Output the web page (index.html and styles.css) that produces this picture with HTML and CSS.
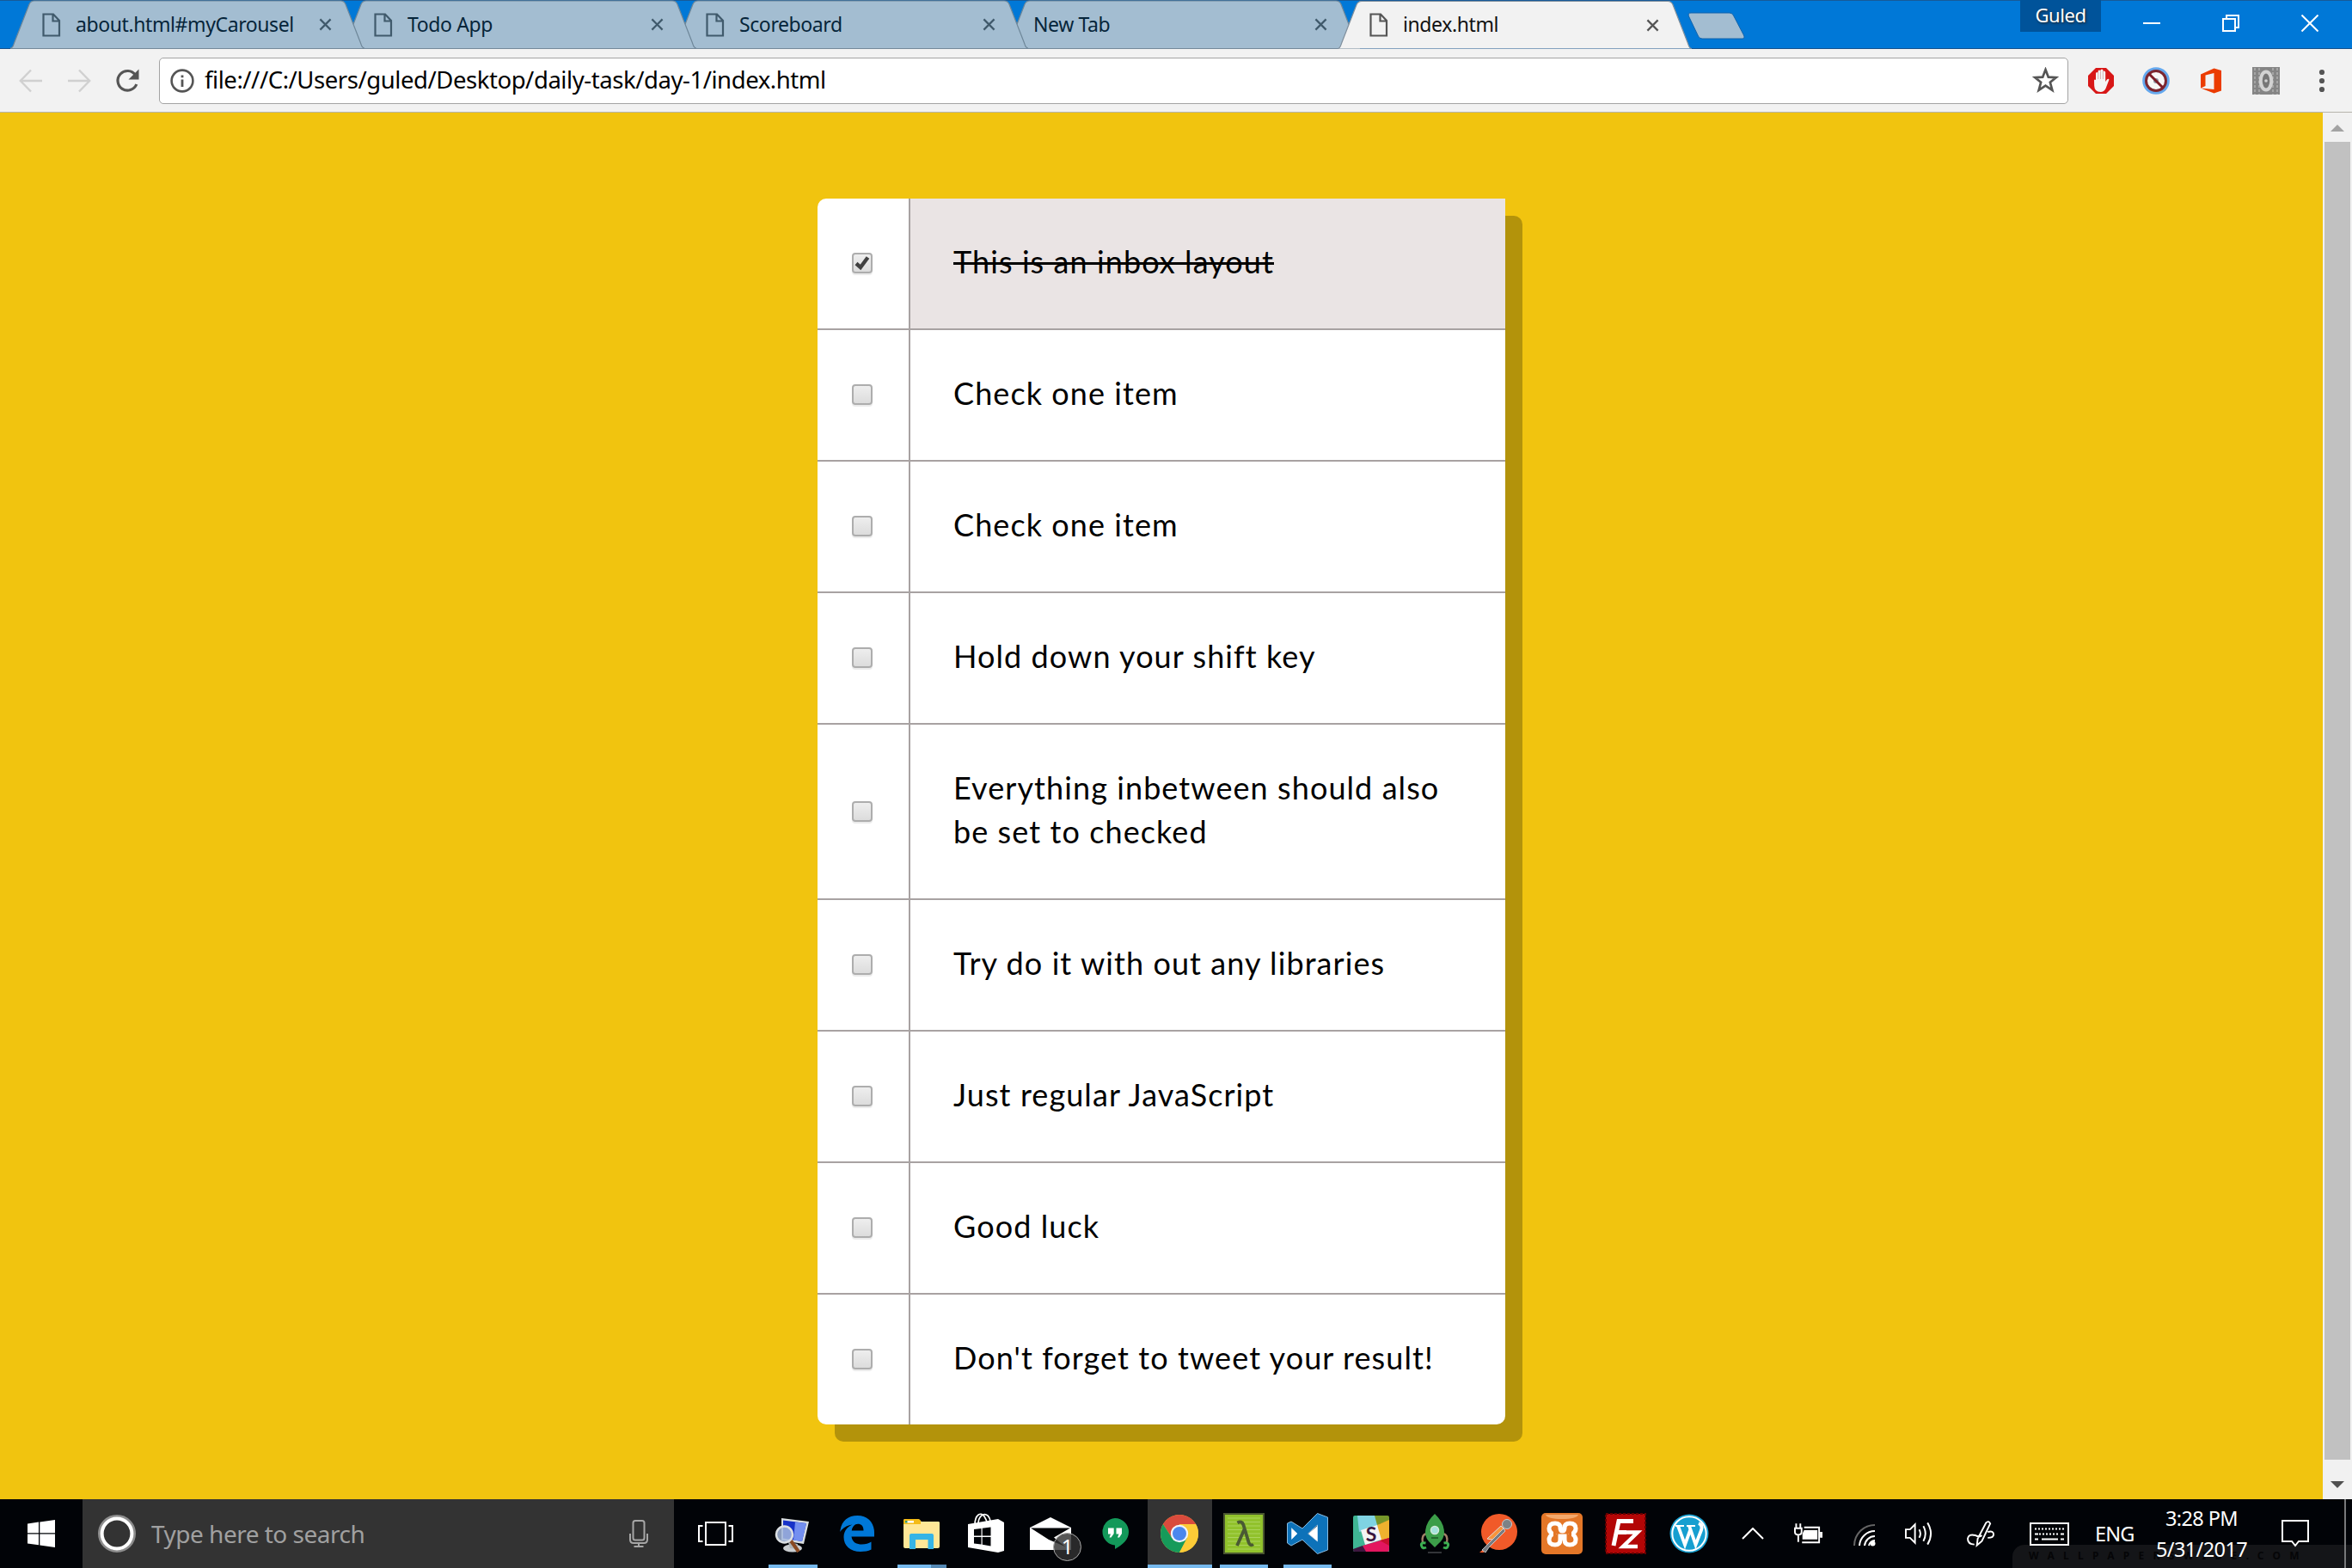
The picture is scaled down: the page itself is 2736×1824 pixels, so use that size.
FILE: index.html
```html
<!DOCTYPE html>
<html lang="en">
<head>
<meta charset="utf-8">
<title>index.html</title>
<link rel="stylesheet" href="styles.css">
</head>
<body>
<svg class="defs" aria-hidden="true">
  <symbol id="file" viewBox="0 0 22 28"><path d="M1.5 1.5H13L20 9V26.500H1.500zM12.500 1.500V9.500H20" fill="none" stroke="currentColor" stroke-width="2.2"/></symbol>
  <symbol id="x" viewBox="0 0 16 16"><path d="M1.500 1.500 14.500 14.500M14.500 1.500 1.500 14.500" fill="none" stroke="currentColor" stroke-width="2.4"/></symbol>
  <symbol id="tabshape" viewBox="0 0 412 57"><path d="M0 56C3 56 3.500 53 4.500 50L22 5C23.500 1.500 25 1 28 1H384C387 1 388.500 1.500 390 5L407.500 50C408.500 53 409 56 412 56" stroke-width="1.200"/></symbol>
</svg>
<div class="window">
  <header class="titlebar">
    <div class="tabs">
      <div class="tab"><svg class="shape"><use href="#tabshape"/></svg><svg class="doc"><use href="#file"/></svg><span class="label">about.html#myCarousel</span><svg class="close"><use href="#x"/></svg></div>
      <div class="tab"><svg class="shape"><use href="#tabshape"/></svg><svg class="doc"><use href="#file"/></svg><span class="label">Todo App</span><svg class="close"><use href="#x"/></svg></div>
      <div class="tab"><svg class="shape"><use href="#tabshape"/></svg><svg class="doc"><use href="#file"/></svg><span class="label">Scoreboard</span><svg class="close"><use href="#x"/></svg></div>
      <div class="tab"><svg class="shape"><use href="#tabshape"/></svg><span class="label plain">New Tab</span><svg class="close"><use href="#x"/></svg></div>
      <div class="tab active"><svg class="shape"><use href="#tabshape"/></svg><svg class="doc"><use href="#file"/></svg><span class="label">index.html</span><svg class="close"><use href="#x"/></svg></div>
      <svg class="newtab" viewBox="0 0 68 32"><path d="M4 1H49Q52 1 53.500 4L65.500 27Q67 31 64 31H17Q14 31 12.500 28L1.500 5Q0 1 4 1z" fill="#a3bdd1" stroke="#1263ab"/></svg>
    </div>
    <div class="user">Guled</div>
    <div class="controls">
      <svg viewBox="0 0 20 20"><path d="M0 10H20" /></svg>
      <svg viewBox="0 0 20 20"><path d="M1 5H15V19H1zM5 5V1H19V15H15"/></svg>
      <svg viewBox="0 0 20 20"><path d="M.5.5 19.500 19.500M19.500.5.5 19.500"/></svg>
    </div>
  </header>
  <div class="toolbar">
    <svg class="nav" viewBox="0 0 28 28"><path d="M27 14H2M14 1.500 1.800 14 14 26.500" fill="none" stroke="#d0d0d0" stroke-width="2.400"/></svg>
    <svg class="nav" viewBox="0 0 28 28"><path d="M1 14H26M14 1.500 26.200 14 14 26.500" fill="none" stroke="#d0d0d0" stroke-width="2.400"/></svg>
    <svg class="nav" viewBox="0 0 28 28"><path d="M23.500 7.200A11.300 11.300 0 1 0 24.800 18" fill="none" stroke="#555" stroke-width="3.200"/><path d="M27.500.5V12.500H15.500z" fill="#555"/></svg>
    <div class="omnibox">
      <svg class="info" viewBox="0 0 28 28"><circle cx="14" cy="14" r="12.400" fill="none" stroke="#555" stroke-width="2.600"/><path d="M14 12.500V21M14 7.500V10.200" stroke="#555" stroke-width="2.800"/></svg>
      <span class="url">file:///C:/Users/guled/Desktop/daily-task/day-1/index.html</span>
      <svg class="star" viewBox="0 0 30 30"><path d="M15 3 18.200 11.300 27 11.700 20.200 17.200 22.600 26 15 21 7.400 26 9.800 17.200 3 11.700 11.800 11.300z" fill="none" stroke="#555" stroke-width="2.600"/></svg>
    </div>
    <div class="extensions">
      <svg viewBox="0 0 32 32"><path d="M10 1H22L31 10V22L22 31H10L1 22V10z" fill="#d81717"/><path d="M8 15.500Q8.500 14 10 15V7.500Q10 6 11.300 6T12.600 7.500V5Q12.600 3.500 14 3.500T15.400 5V4Q15.600 2.500 17 2.500T18.500 4V5.500Q18.700 4.500 19.800 4.500T21.200 6V17L23 14.500Q24.500 13 25.500 14.500L21.500 25Q19.500 29 15.500 29 8.500 29 8.200 22z" fill="#f4f4f4"/><path d="M12.700 7V14M15.500 5V14M18.400 5V14" stroke="#c99" stroke-width=".7"/></svg>
      <svg viewBox="0 0 32 32"><circle cx="16" cy="16" r="15.800" fill="#64a8ee"/><circle cx="16" cy="16" r="11.500" fill="#f7f7f7" stroke="#7c2630" stroke-width="3"/><circle cx="16" cy="16" r="3" fill="#8b96a3"/><path d="M8 8 24 24" stroke="#7c1b26" stroke-width="3"/></svg>
      <svg viewBox="0 0 32 32"><path d="M4 8.500 19.500 1.500 28 4V27.500L19.500 30.500 4 24.500 19.500 26V7L9.500 9.500V22L4 24.500z" fill="#eb3c00"/></svg>
      <svg viewBox="0 0 32 32"><path fill="#858585" d="M0 0H32V32H0z"/><path d="M3 1V32M8 1V32M24 1V32M29 1V32" stroke="#a5a5a5" stroke-width="2" stroke-dasharray="3 2"/><ellipse cx="16" cy="16" rx="6.300" ry="10.500" fill="#777" stroke="#d2d2d2" stroke-width="4"/><circle cx="16" cy="16" r="1.800" fill="#d2d2d2"/></svg>
    </div>
    <svg class="dots" viewBox="0 0 8 28"><g fill="#555"><circle cx="4" cy="4" r="3.100"/><circle cx="4" cy="14" r="3.100"/><circle cx="4" cy="24" r="3.100"/></g></svg>
  </div>
  <div class="viewport">
    <main class="page">
      <div class="inbox">
        <label class="item done"><span class="cell"><i class="box"><svg viewBox="0 0 24 24"><path d="M5 12.500 10 17 18.500 5.500" fill="none" stroke="#404040" stroke-width="4.400"/></svg></i></span><p>This is an inbox layout</p></label>
        <label class="item"><span class="cell"><i class="box"></i></span><p>Check one item</p></label>
        <label class="item"><span class="cell"><i class="box"></i></span><p>Check one item</p></label>
        <label class="item"><span class="cell"><i class="box"></i></span><p>Hold down your shift key</p></label>
        <label class="item"><span class="cell"><i class="box"></i></span><p>Everything inbetween should also be set to checked</p></label>
        <label class="item"><span class="cell"><i class="box"></i></span><p>Try do it with out any libraries</p></label>
        <label class="item"><span class="cell"><i class="box"></i></span><p>Just regular JavaScript</p></label>
        <label class="item"><span class="cell"><i class="box"></i></span><p>Good luck</p></label>
        <label class="item"><span class="cell"><i class="box"></i></span><p>Don't forget to tweet your result!</p></label>
      </div>
    </main>
    <div class="scrollbar">
      <svg viewBox="0 0 16 8"><path d="M0 8 8 0 16 8z" fill="#a3a3a3"/></svg>
      <div class="thumb"></div>
      <svg viewBox="0 0 16 8"><path d="M0 0H16L8 8z" fill="#505050"/></svg>
    </div>
  </div>
  <footer class="taskbar">
    <div class="watermark">WALLPAPERSWIDE.COM</div>
    <div class="start"><svg viewBox="0 0 32 32"><path d="M0 4.500 13 2.600V15.300H0zM14.300 2.400 32 0V15.300H14.300zM0 16.500H13V29.300L0 27.500zM14.300 16.500H32V32L14.300 29.500z" fill="#fff"/></svg></div>
    <div class="search">
      <svg class="cortana" viewBox="0 0 44 44"><circle cx="22" cy="22" r="20.500" fill="none" stroke="#8d8d8d" stroke-width="3"/><circle cx="22" cy="22" r="17.400" fill="none" stroke="#fff" stroke-width="4"/></svg>
      <span class="prompt">Type here to search</span>
      <svg class="mic" viewBox="0 0 22 32"><g fill="none" stroke="#a6a6a6" stroke-width="2"><rect x="4.500" y="1" width="13" height="22.500" rx="2.500"/><path d="M1 16V23Q1 27 5 27H17Q21 27 21 23V16M11 27V31M5.500 31H16.500"/></g></svg>
    </div>
    <div class="apps">
      <div class="app view"><svg viewBox="0 0 48 48"><g fill="none" stroke="#fff" stroke-width="2"><path d="M13 11H36V37H13zM9.500 15H5V33H9.500M39.500 15H44V33H39.500"/></g></svg></div>
      <div class="app open"><svg viewBox="0 0 48 48"><ellipse cx="24" cy="41" rx="11" ry="4.500" fill="#c9cdd0"/><path d="M19 34 30 36 29 42 21 41z" fill="#aeb4b8"/><path d="M11 6 43 10 37 36 11 32z" fill="#d8dde0"/><path d="M13 8.500 40 12 35 33 13 29.500z" fill="#1732c8"/><path d="M27 10.500 40 12 35 33 25 31.500z" fill="#738ff0"/><path d="M21 31 31 45" stroke="#8a4a22" stroke-width="4"/><circle cx="14.500" cy="25" r="9.500" fill="#a5b9dc" fill-opacity=".85" stroke="#dce0e3" stroke-width="2.500"/></svg></div>
      <div class="app"><svg viewBox="0 0 48 48"><path d="M4.200 22C5.500 9.500 13 3 24.500 3 36.500 3 44 11.500 44 22.500V27.500H17.500C18.500 34.500 24 36.500 29.500 36.500 34 36.500 37.500 35.300 40.500 33.500V42.500C37 44.300 32.500 45 28 45 16 45 8.500 38 8.500 28 8.500 21 12.500 16.500 18.500 13.500 13 14 7.500 17 4.200 22zM17.700 20.500H31.500C31.500 15.500 29 12.800 25 12.800 20.800 12.800 18.500 16.500 17.700 20.500z" fill="#0078d7"/></svg></div>
      <div class="app open multi"><svg viewBox="0 0 48 48"><path d="M3 9Q3 7 5 7H20L24 10H44Q45 10 45 11.500V39Q45 41 43 41H5Q3 41 3 39z" fill="#ffe797"/><path d="M3 13V9Q3 7 5 7H20Q22 7 23 9V13z" fill="#f4bb17"/><path d="M5 9H15V11.500H5z" fill="#fff"/><path d="M5 9H7.500V11.500H5z" fill="#3a9d69"/><path d="M10 42V26Q10 24 12 24H36Q38 24 38 26V42H31.500V31H17V42z" fill="#35b4e6"/></svg></div>
      <div class="app"><svg viewBox="0 0 48 48"><path d="M3 13 38 7V46L3 40zM38 7 45 11V44L38 46z" fill="#fff"/><path d="M11 14C11 2 18-2 22 4 24 7 25 9 25 12M15 13C15 4 21-1 26 3 28 5 29 8 29 11" fill="none" stroke="#fff" stroke-width="1.700"/><path d="M10 19 18.500 18V26.500H10zM19.700 17.800 29.500 16.500V26.500H19.700zM10 28H18.500V36.500L10 35.500zM19.700 28H29.500V38.500L19.700 36.800z" fill="#010307"/></svg></div>
      <div class="app"><svg class="mail" viewBox="0 0 60 48"><path d="M0 17 24 5 48 17V43H0z" fill="#fff"/><path d="M1 17.500H47L28 28.500 41 39 22 31z" fill="#010307"/></svg><span class="count">1</span></div>
      <div class="app"><svg viewBox="0 0 48 48"><path d="M24 6A16 16 0 0 1 40 22C40 31 33 37 24 42V37.500A15.800 15.800 0 0 1 24 6z" fill="#13995a"/><path d="M16 17.500H22.700V24L19.500 28.500H17.500L19 24.500H16zM25.500 17.500H32V24L29 28.500H27L28.500 24.500H25.500z" fill="#fff"/></svg></div>
      <div class="app open current"><svg viewBox="0 0 48 48"><circle cx="24" cy="24" r="22" fill="#fcc934"/><path d="M4.950 13A22 22 0 0 1 43.050 13L24 14 15.300 29z" fill="#d94b3d"/><path d="M4.950 13 15.300 29 24 34 33 28.500 24 46A22 22 0 0 1 4.950 13z" fill="#169a5a"/><path d="M43.050 13A22 22 0 0 1 24 46L33.500 29 33 14H24V13z" fill="#fccb37"/><circle cx="24" cy="24" r="10.200" fill="#eef3fb"/><circle cx="24" cy="24" r="8" fill="#4b87ee"/></svg></div>
      <div class="app late open"><svg viewBox="0 0 48 48"><path fill="#4a5630" d="M0 0H48V48H0z"/><path fill="#91c22c" d="M2 2H46V46H2z"/><path d="M5 6H43M5 10.500H43M5 15H43M5 19.500H43M5 24H43M5 28.500H43M5 33H43M5 37.500H43M5 42H43" stroke="#abd35c" stroke-width="1.200"/><path d="M16.500 11.500Q21.500 8.500 23.500 14L29.500 34Q31 39 35 36.500M24.500 19 16 38" fill="none" stroke="#4a5a33" stroke-width="3.800"/></svg></div>
      <div class="app late open"><svg viewBox="0 0 48 48"><path d="M35.500.5 47.500 5V43L35.500 47.500 18 31 5 38 .5 35V12L5 10 18 18zM35.500 14 24.500 24 35.500 33zM5.500 17.500V30.500L12 24z" fill="#0d72b9" fill-rule="evenodd" stroke="#8abbe0" stroke-width="1"/><path d="M35.500 15 25 24 35.500 33zM5.500 18V30.500L12 24z" fill="#fff"/></svg></div>
      <div class="app late"><svg viewBox="0 0 48 48"><path d="M5 3H30L34 18 45 27V45H5Q3 45 3 43V5Q3 3 5 3z" fill="#3fb594"/><path d="M8 3H29L32 16 10 22z" fill="#7fd3e2"/><path d="M28 3H43Q45 3 45 5V9L31 14z" fill="#76962a"/><path d="M31 14 45 8V29L35 33z" fill="#eeb22e"/><path d="M14 38 45 29V43Q45 45 43 45H17z" fill="#e3165f"/><path d="M3 42 14 38 18 45H5Q3 45 3 43z" fill="#3e1740"/><path d="M34 32 45 29V38z" fill="#c8102e"/><path d="M12 20 31 14 36 31 17 37z" fill="#f5f3f4"/><text x="24" y="33" class="slack">S</text></svg></div>
      <div class="app late"><svg viewBox="0 0 48 48"><path d="M15 24Q8 25 10 35M33 24Q40 25 38 35" fill="none" stroke="#a27f67" stroke-width="2.500"/><path d="M24 1Q35 11 35 23 35 30 28 36L24 40 20 36Q13 30 13 23 13 11 24 1z" fill="#3c9e49"/><path d="M13.500 35Q7.500 34 8.500 38T14 40M34.500 35Q40.500 34 39.500 38T34 40" fill="none" stroke="#3caf50" stroke-width="3"/><circle cx="24" cy="20" r="4.500" fill="#a5e3dc" stroke="#d3e9da" stroke-width="1.500"/><path d="M20 29H28" stroke="#24682e" stroke-width="2"/><path d="M16 46H32" stroke="#44474b" stroke-width="1.500"/></svg></div>
      <div class="app late"><svg viewBox="0 0 48 48"><circle cx="25" cy="22" r="21" fill="#f15a29"/><path d="M11 30 27 15 31 19 17 31z" fill="#f7943c" stroke="#ddd" stroke-width="1"/><path d="M10 39 2 46H7z" fill="#f15a29"/><path d="M30 18 20 28 12 36 5 43 9 46 13 40 22 31 32 21z" fill="#777b80" stroke="#ddd" stroke-width=".8"/><circle cx="34" cy="13" r="5.500" fill="#7d8286" stroke="#c9cbce"/></svg></div>
      <div class="app late"><svg viewBox="0 0 48 48"><rect width="48" height="48" rx="5" fill="#e47728"/><path d="M5 2H43Q41 7 24 7T5 2z" fill="#f5a96c"/><path d="M22 17Q22 12 16 12 9 12 9 18 9 22 13 24.500 9 27 9 31 9 37 16 37 22 37 22 31V27H27V31Q27 37 33 37 40 37 40 31 40 27 36 24.500 40 22 40 18 40 12 33 12 27 12 27 17 27 21 24.500 21T22 17z" fill="none" stroke="#fff" stroke-width="5"/><path d="M15.500 17V32M33.500 17V32" stroke="#e47728" stroke-width="3"/></svg></div>
      <div class="app late"><svg viewBox="0 0 48 48"><path fill="#b30606" d="M1 1H47V47H1z"/><path d="M1 1H47V47H1z" fill="none" stroke="#610000" stroke-width="2" stroke-dasharray="3 2"/><path d="M10 38 16 9.500H33M13 22.500H25" fill="none" stroke="#fff" stroke-width="5"/><path d="M23 22.500H38L21 39H38" fill="none" stroke="#fff" stroke-width="4.500"/></svg></div>
      <div class="app late"><svg viewBox="0 0 48 48"><circle cx="24" cy="24" r="22.500" fill="#169fd0"/><circle cx="24" cy="24" r="19.700" fill="none" stroke="#fff" stroke-width="2"/><path d="M8 15H18M21 15H31" stroke="#fff" stroke-width="2"/><path d="M11 15 19 37 25.500 19M24 15 31.500 37 38 20Q40 14 35 12" fill="none" stroke="#fff" stroke-width="3.800"/></svg></div>
    </div>
    <div class="tray">
      <svg class="i1" viewBox="0 0 26 14"><path d="M1 13 13 1 25 13" /></svg>
      <svg class="i2" viewBox="0 0 34 24"><path d="M12 4.500H30V22.500H9.500" /><path d="M12 8H28V19H10V12zM31 10H34V17H31z" fill="#fff" stroke="none"/><path d="M5 14V22M2.500 0V5M7.500 0V5M1 5.500H9V10Q9 13.500 5 13.500T1 10z"/></svg>
      <svg class="i3" viewBox="0 0 26 26"><path d="M1 25A24 24 0 0 1 25 1" stroke="#666"/><path d="M7 25A18 18 0 0 1 25 8M13 25A12 12 0 0 1 25 14M18 25A7 7 0 0 1 25 19"/><circle cx="22.500" cy="22.500" r="3" fill="#fff" stroke="none"/></svg>
      <svg class="i4" viewBox="0 0 34 28"><path d="M1 9H6L12 3V25L6 19H1zM17 9Q20 14 17 19M22 5Q27 14 22 23M27 1Q35 14 27 27"/></svg>
      <svg class="i5" viewBox="0 0 34 32"><path d="M12 30 13 22 23 3Q26 0 28 4L18 25zM9 29Q1 29 1 22 2 16 10 18 15 21 18 18M25 14Q32 12 32 17 32 21 25 21"/></svg>
      <svg class="i6" viewBox="0 0 46 27"><path d="M1 1H45V26H1z"/><path d="M6 7.500H41M11 13.500H35" stroke-dasharray="2 2"/><path d="M6 13.500H10M36 13.500H40M6 19.500H10M14 19.500H33M36 19.500H40"/></svg>
      <span class="lang">ENG</span>
      <div class="clock"><span>3:28 PM</span><span>5/31/2017</span></div>
      <svg class="i7" viewBox="0 0 32 33"><path d="M1 1H31V25H20L16 30 12 25H1z"/></svg>
      <div class="peek"></div>
    </div>
  </footer>
</div>
</body>
</html>
```
FILE: styles.css
```css
* { box-sizing: border-box; }
body { margin: 0; font-family: "Noto Sans", sans-serif; }
svg { display: block; flex: none; }
.defs { position: absolute; width: 0; height: 0; }
.window { width: 2736px; height: 1824px; display: flex; flex-direction: column; overflow: hidden; }

/* Title bar and tabs */
.titlebar { height: 57px; flex: none; display: flex; background: #0078d7; border-bottom: 1px solid #14518c; box-shadow: inset 0 1px #175a98; }
.tabs { display: flex; margin-left: 12px; height: 57px; }
.tab { position: relative; width: 412px; height: 57px; margin-right: -26px; flex: none; display: flex; align-items: center; padding: 1px 26px 0 37px; color: #405a6c; z-index: 1; }
.tab:nth-child(1) { z-index: 4; }
.tab:nth-child(2) { z-index: 3; }
.tab:nth-child(3) { z-index: 2; }
.tab.active { z-index: 5; color: #555; }
.shape { position: absolute; left: 0; top: 0; width: 412px; height: 57px; z-index: -1; fill: #a3bdd1; stroke: #6e8799; }
.tab:not(.active) { border-bottom: 1px solid #75899a; }
.active .shape { fill: #f2f2f2; stroke: #81909d; height: 58px; }
.doc { width: 22px; height: 28px; margin-right: 17px; }
.label { flex: 1; font-size: 23px; line-height: 30px; letter-spacing: -0.4px; color: #06253a; white-space: nowrap; margin-top: -2px; }
.active .label { color: #111; }
.close { width: 15px; height: 15px; margin-right: 12px; }
.plain { margin-left: -5px; }
.newtab { width: 68px; height: 32px; margin: 14px 0 0 21px; }
.user { margin-left: auto; width: 94px; height: 37px; background: #00539a; color: #fff; font-size: 22px; line-height: 35px; letter-spacing: -0.4px; text-align: center; text-shadow: 1px 1px 3px #222; }
.controls { display: flex; gap: 72px; margin: 17px 39px 0 49px; }
.controls svg { width: 20px; height: 20px; fill: none; stroke: #fff; stroke-width: 2; }

/* Toolbar */
.toolbar { height: 74px; flex: none; display: flex; align-items: center; background: #f2f2f2; border-bottom: 1px solid #b6b4ac; padding: 0 31px 0 22px; }
.nav { width: 28px; height: 28px; margin-right: 28px; }
.nav:nth-child(3) { margin-right: 23px; }
.omnibox { width: 2221px; height: 54px; display: flex; align-items: center; background: #fff; border: 1px solid #a3a3a3; border-radius: 5px; padding: 0 10px 0 12px; }
.info { width: 28px; height: 28px; margin-right: 12px; }
.url { flex: 1; font-size: 27.500px; letter-spacing: -0.440px; color: #000; margin-top: -3px; white-space: nowrap; }
.star { width: 31px; height: 31px; }
.extensions { display: flex; gap: 32px; margin-left: 22px; }
.extensions svg { width: 32px; height: 32px; }
.dots { width: 8px; height: 28px; margin-left: auto; }

/* Page */
.viewport { height: 1613px; flex: none; display: flex; }
.page { flex: 1; background: #f1c40f; padding-top: 100px; }
.inbox { width: 800px; margin: 0 auto; background: #fff; border-radius: 10px; box-shadow: 20px 20px 0 #b3930b; }
.item { display: flex; border-bottom: 2px solid #a8a2a2; }
.item:last-child { border-bottom: 0; }
.cell { width: 106px; flex: none; display: flex; align-items: center; justify-content: center; padding: 0 2px 1px 0; }
.box { width: 24px; height: 24px; border: 2px solid #adadad; border-radius: 4px; background: linear-gradient(#eee, #dcdcdc); box-shadow: 0 2px 1px #eaeaea; }
.box svg { width: 24px; height: 24px; margin: -2px; }
.item p { flex: 1; margin: 0; padding: 48px 50px 52px 50px; border-left: 2px solid #a8a2a2; font-family: Lato, sans-serif; font-size: 36px; line-height: 51px; letter-spacing: 1.080px; color: #000; }
.done p { background: #eae4e4; text-decoration: line-through; text-decoration-thickness: 3px; }
.scrollbar { width: 34px; flex: none; background: #f1f1f1; display: flex; flex-direction: column; align-items: center; padding: 14px 0 13px; }
.scrollbar svg { width: 16px; height: 8px; }
.thumb { width: 30px; height: 1533px; margin: 12px 0 auto; background: #c1c1c1; }

/* Taskbar */
.taskbar { position: relative; height: 80px; flex: none; display: flex; background: #010307; color: #fff; }
.watermark { position: absolute; right: 0; bottom: 0; width: 395px; height: 27px; padding-left: 19px; background: #141518; border-top-left-radius: 14px; color: #050507; font-size: 12px; line-height: 26px; letter-spacing: 10.300px; font-weight: bold; white-space: nowrap; }
.start { width: 96px; display: flex; align-items: center; justify-content: center; }
.start svg { width: 32px; height: 32px; }
.search { width: 688px; display: flex; align-items: center; background: #333; padding: 0 30px 0 18px; }
.cortana { width: 44px; height: 44px; margin-right: 18px; }
.prompt { flex: 1; font-size: 28px; letter-spacing: -0.5px; color: #a0a0a0; }
.mic { width: 22px; height: 32px; }
.apps { display: flex; }
.app { position: relative; width: 75px; display: flex; align-items: center; justify-content: center; padding-right: 2px; }
.app svg { width: 48px; height: 48px; }
.app.late { width: 74px; padding-right: 0; }
.app.view { width: 101px; padding-right: 6px; }
.open::after { content: ""; position: absolute; bottom: 0; left: 9px; right: 9px; height: 4px; background: #76b9ed; }
.multi::after { background: linear-gradient(90deg, #76b9ed 39px, #5488b3 39px); }
.current { background: #333; }
.current::after { left: 0; right: 0; }
.app .mail { width: 60px; margin-left: 13px; }
.count { position: absolute; left: 40px; top: 39px; width: 33px; height: 33px; border-radius: 50%; border: 1.500px solid #aaa; background: rgba(50, 50, 50, .82); font-size: 24px; line-height: 29px; text-align: center; }
.slack { font: bold 23px Lato, sans-serif; fill: #3b1740; text-anchor: middle; }
.tray { position: relative; flex: 1; display: flex; align-items: center; }
.tray svg { fill: none; stroke: #fff; stroke-width: 2; }
.i1 { width: 26px; height: 14px; margin-left: 24px; }
.i2 { width: 33px; height: 24px; margin-left: 35px; }
.i3 { width: 26px; height: 26px; margin-left: 36px; margin-top: 4px; }
.i4 { width: 33px; height: 28px; margin-left: 34px; }
.i5 { width: 33px; height: 32px; margin-left: 39px; }
.i6 { width: 46px; height: 27px; margin-left: 40px; }
.lang { width: 46px; margin-left: 30px; font-size: 23.500px; letter-spacing: -0.9px; }
.clock { width: 130px; margin-left: 13px; display: flex; flex-direction: column; align-items: center; font-size: 23.500px; line-height: 36.500px; letter-spacing: -0.6px; }
.i7 { width: 32px; height: 33px; margin-left: 28px; }
.peek { width: 2px; height: 80px; background: #77787a; margin-left: auto; margin-right: 7px; }
```
